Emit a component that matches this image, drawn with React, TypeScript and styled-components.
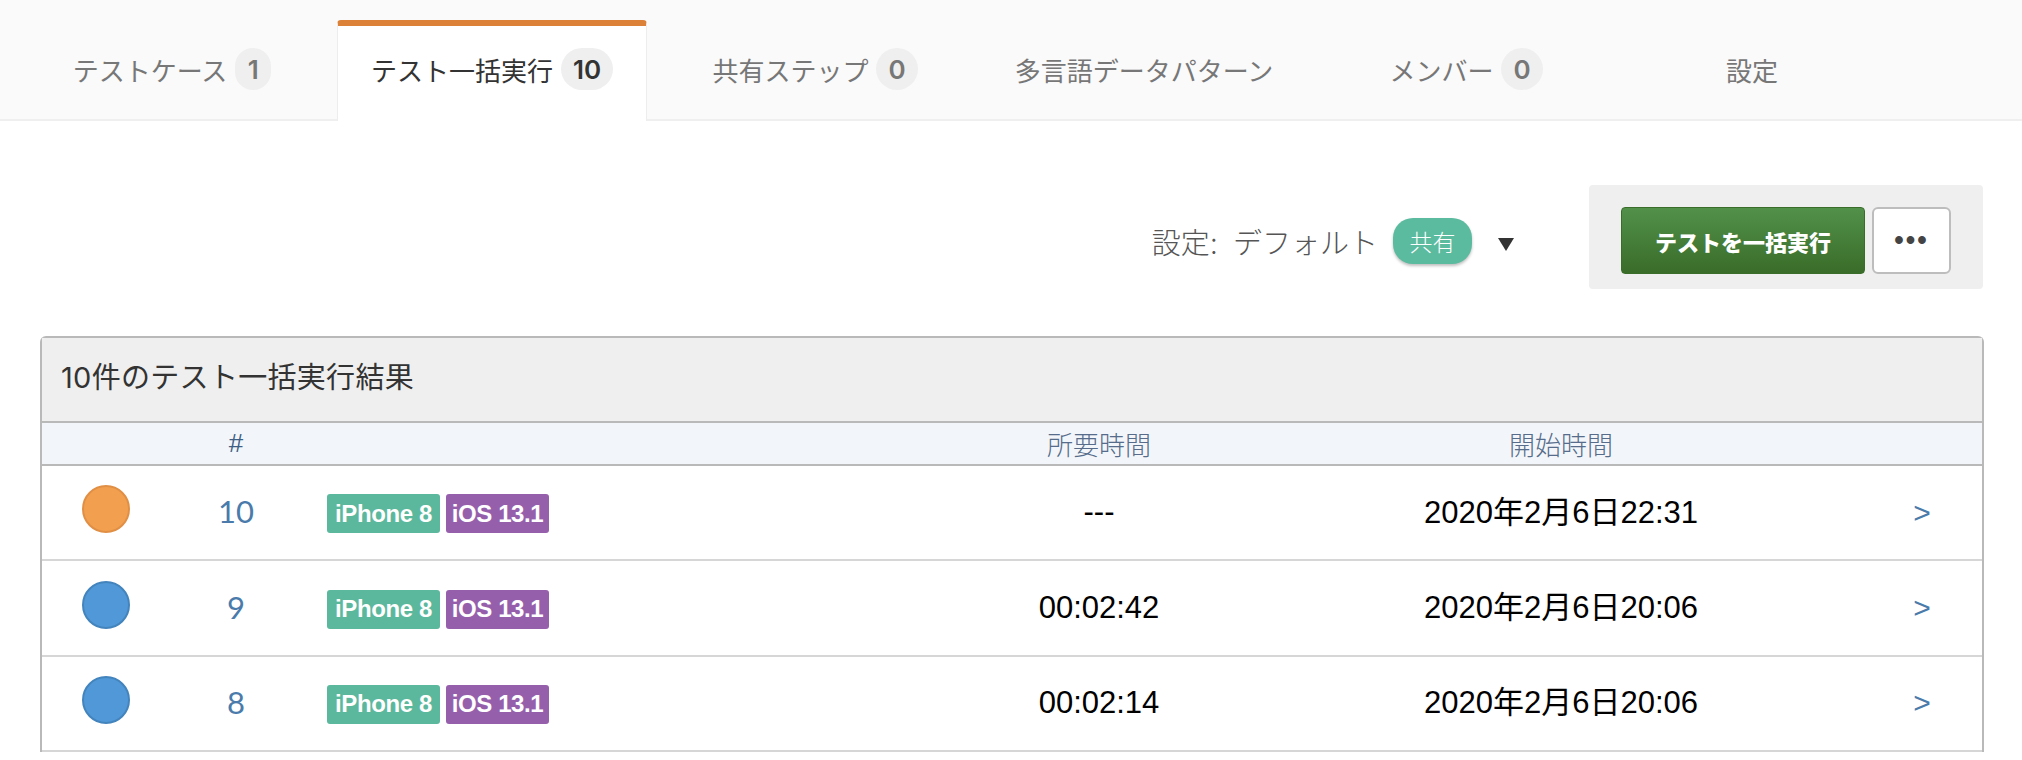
import React from "react";
import styled, { createGlobalStyle } from "styled-components";

const Global = createGlobalStyle`
  html, body { margin: 0; padding: 0; background: #fff; }
  body { font-family: Inter, "Noto Sans CJK JP", sans-serif; width: 2022px; height: 760px; overflow: hidden; }
  * { box-sizing: border-box; }
`;

const TabBar = styled.div`
  display: flex;
  height: 121px;
  padding: 20px 0 0 7px;
  background: #fafafa;
  border-bottom: 2px solid #efefef;
`;
const Tab = styled.div<{ $w: number; $active?: boolean }>`
  width: ${(p) => p.$w}px;
  height: ${(p) => (p.$active ? "101px" : "99px")};
  display: flex;
  align-items: center;
  justify-content: center;
  gap: 8px;
  font-size: 26px;
  color: ${(p) => (p.$active ? "#333" : "#777")};
  padding-bottom: ${(p) => (p.$active ? "9px" : "7px")};
  background: ${(p) => (p.$active ? "#fff" : "transparent")};
  border-top: ${(p) => (p.$active ? "6px solid #db8238" : "6px solid transparent")};
  border-left: ${(p) => (p.$active ? "1px solid #ededed" : "none")};
  border-right: ${(p) => (p.$active ? "1px solid #ededed" : "none")};
  border-radius: 4px 4px 0 0;
`;
const Count = styled.span`
  min-width: 36px;
  height: 42px;
  padding: 0 12px;
  border-radius: 21px;
  background: #efefef;
  display: flex;
  align-items: center;
  justify-content: center;
  font-size: 26px;
  font-weight: 600;
`;
const ActionRow = styled.div`
  display: flex;
  justify-content: flex-end;
  align-items: center;
  margin: 64px 39px 0 0;
`;
const Setting = styled.div`
  display: flex;
  align-items: center;
  margin-right: 75px;
  padding-top: 8px;
  font-size: 29px;
  font-weight: 300;
  color: #555;
`;
const SettingLabel = styled.span`
  margin-right: 15px;
`;
const SharedPill = styled.span`
  width: 79px;
  height: 46px;
  margin-left: 15px;
  margin-right: 26px;
  border-radius: 20px;
  background: #5bbb9f;
  box-shadow: 0 2px 3px rgba(0, 0, 0, 0.25);
  color: #fff;
  font-size: 23px;
  font-weight: 300;
  display: flex;
  align-items: center;
  justify-content: center;
`;
const Caret = styled.span`
  width: 0;
  height: 0;
  margin-top: 6px;
  border-left: 8px solid transparent;
  border-right: 8px solid transparent;
  border-top: 13px solid #333;
`;
const Toolbar = styled.div`
  width: 394px;
  height: 104px;
  padding: 22px 32px 15px;
  display: flex;
  gap: 7px;
  background: #efefef;
  border-radius: 4px;
`;
const RunButton = styled.button`
  width: 244px;
  height: 67px;
  border: 1px solid #3a6c2a;
  border-radius: 4px;
  background: linear-gradient(#52914a, #396c28);
  color: #fff;
  font-family: inherit;
  font-size: 22px;
  font-weight: 900;
  padding: 0;
`;
const MoreButton = styled.button`
  width: 79px;
  height: 67px;
  border: 2px solid #bdbdbd;
  border-radius: 6px;
  background: #fff;
  color: #444;
  font-family: "Liberation Sans", sans-serif;
  font-size: 27px;
  font-weight: 700;
  letter-spacing: 2px;
  padding: 0;
`;
const Card = styled.section`
  margin: 47px 38px 0 40px;
  border: 2px solid #b9b9b9;
  border-bottom: none;
  border-radius: 6px 6px 0 0;
`;
const CardTitle = styled.div`
  height: 85px;
  padding: 0 0 10px 19px;
  display: flex;
  align-items: center;
  background: #efefef;
  font-size: 29px;
  letter-spacing: 0.3px;
  color: #333;
  border-bottom: 2px solid #b9b9b9;
`;
const columns = "127px 134px 634px 324px 600px 121px";
const HeadRow = styled.div`
  display: grid;
  grid-template-columns: ${columns};
  height: 43px;
  background: #f2f6fa;
  border-bottom: 2px solid #b9b9b9;
  align-items: center;
  text-align: center;
  font-size: 26px;
  font-weight: 300;
  color: #566c8a;
`;
const Hash = styled.span`
  font-family: "Liberation Sans", sans-serif;
  font-weight: 400;
  color: #3f5f85;
`;
const Row = styled.div`
  display: grid;
  grid-template-columns: ${columns};
  height: 95.4px;
  align-items: center;
  text-align: center;
  border-bottom: 2px solid #d6d6d6;
  font-family: "Liberation Sans", "Noto Sans CJK JP", sans-serif;
  font-size: 31px;
  color: #000;
`;
const StatusCell = styled.div`
  display: flex;
  justify-content: center;
  padding-bottom: 7px;
`;
const Dot = styled.span<{ $color: string; $edge: string }>`
  width: 48px;
  height: 48px;
  border-radius: 50%;
  background: ${(p) => p.$color};
  border: 2px solid ${(p) => p.$edge};
`;
const Num = styled.div`
  font-family: Lato, sans-serif;
  font-size: 31px;
  color: #4a7bab;
  padding-bottom: 3px;
`;
const Tags = styled.div`
  display: flex;
  gap: 6px;
  padding: 2px 0 0 24px;
`;
const Tag = styled.span<{ $bg: string; $w: number }>`
  width: ${(p) => p.$w}px;
  height: 39px;
  border-radius: 3px;
  background: ${(p) => p.$bg};
  color: #fff;
  font-size: 24px;
  font-weight: 700;
  letter-spacing: -0.4px;
  display: flex;
  align-items: center;
  justify-content: center;
`;
const Duration = styled.div`
  padding-bottom: 1px;
`;
const StartCell = styled.div`
  padding-bottom: 7px;
`;
const Chevron = styled.div`
  color: #4a7bab;
  font-size: 30px;
  padding: 0 0 0 1px;
`;

type Run = { n: number; color: string; edge: string; dur: string; start: string };
const runs: Run[] = [
  { n: 10, color: "#f2a04f", edge: "#e08f45", dur: "---", start: "2020年2月6日22:31" },
  { n: 9, color: "#5098d8", edge: "#4384bd", dur: "00:02:42", start: "2020年2月6日20:06" },
  { n: 8, color: "#5098d8", edge: "#4384bd", dur: "00:02:14", start: "2020年2月6日20:06" },
];

export default function App() {
  return (
    <>
      <Global />
      <TabBar>
        <Tab $w={330}>テストケース<Count>1</Count></Tab>
        <Tab $w={310} $active>テスト一括実行<Count>10</Count></Tab>
        <Tab $w={336}>共有ステップ<Count>0</Count></Tab>
        <Tab $w={322}>多言語データパターン</Tab>
        <Tab $w={322}>メンバー<Count>0</Count></Tab>
        <Tab $w={250}>設定</Tab>
      </TabBar>
      <ActionRow>
        <Setting>
          <SettingLabel>設定:</SettingLabel>デフォルト
          <SharedPill>共有</SharedPill>
          <Caret />
        </Setting>
        <Toolbar>
          <RunButton>テストを一括実行</RunButton>
          <MoreButton>•••</MoreButton>
        </Toolbar>
      </ActionRow>
      <Card>
        <CardTitle>10件のテスト一括実行結果</CardTitle>
        <HeadRow>
          <span />
          <Hash>#</Hash>
          <span />
          <span>所要時間</span>
          <span>開始時間</span>
          <span />
        </HeadRow>
        {runs.map((r) => (
          <Row key={r.n}>
            <StatusCell><Dot $color={r.color} $edge={r.edge} /></StatusCell>
            <Num>{r.n}</Num>
            <Tags>
              <Tag $bg="#5bb89d" $w={113}>iPhone 8</Tag>
              <Tag $bg="#965fab" $w={103}>iOS 13.1</Tag>
            </Tags>
            <Duration>{r.dur}</Duration>
            <StartCell>{r.start}</StartCell>
            <Chevron>&gt;</Chevron>
          </Row>
        ))}
      </Card>
    </>
  );
}
